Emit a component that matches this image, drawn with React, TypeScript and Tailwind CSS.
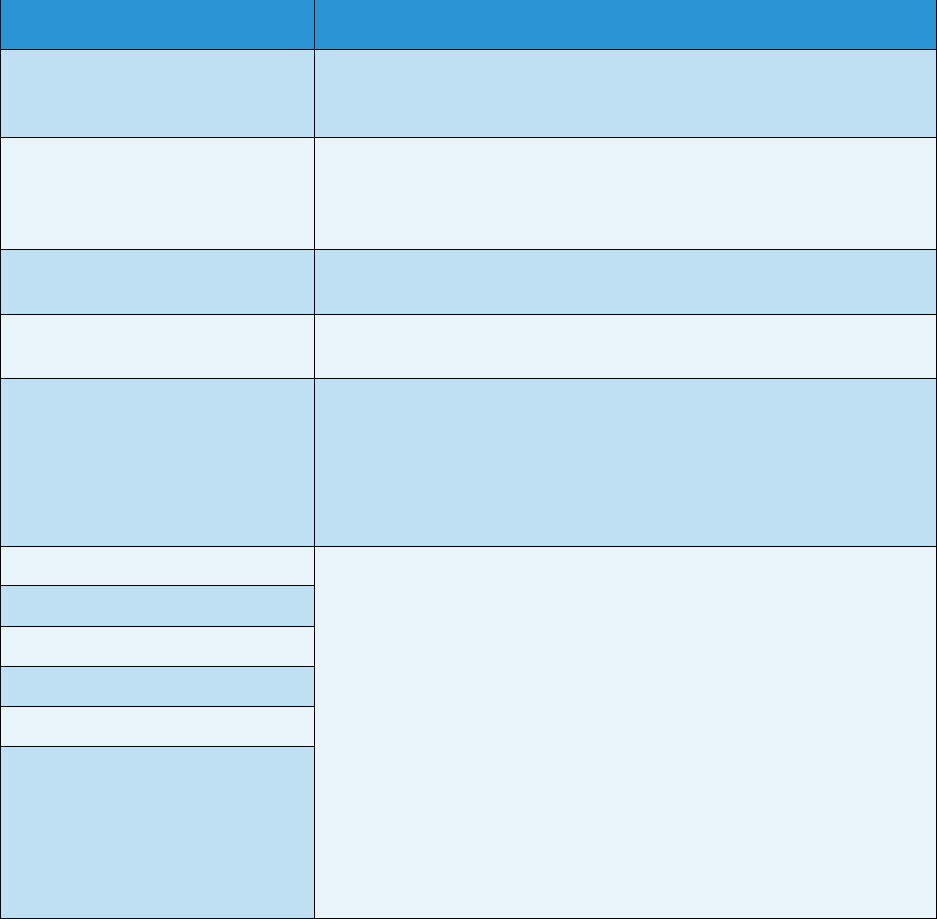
import React from "react";

const H = "bg-[#2a95d5]";
const M = "bg-[#bfe0f3]";
const L = "bg-[#e9f4fb]";

function Row({ h, c }: { h: string; c: string }) {
  return (
    <div className={`grid grid-cols-[313px_1fr] gap-px ${h}`}>
      <div className={c} />
      <div className={c} />
    </div>
  );
}

export default function App() {
  return (
    <div className="w-[937px] h-[919px] bg-black px-px pb-px flex flex-col gap-px">
      <Row h="h-[49px]" c={H} />
      <Row h="h-[87px]" c={M} />
      <Row h="h-[111px]" c={L} />
      <Row h="h-[64px]" c={M} />
      <Row h="h-[63px]" c={L} />
      <Row h="h-[167px]" c={M} />
      <div className="grid grid-cols-[313px_1fr] gap-px h-[371px]">
        <div className="flex flex-col gap-px">
          <div className={`h-[38px] ${L}`} />
          <div className={`h-[40px] ${M}`} />
          <div className={`h-[39px] ${L}`} />
          <div className={`h-[39px] ${M}`} />
          <div className={`h-[39px] ${L}`} />
          <div className={`flex-1 ${M}`} />
        </div>
        <div className={L} />
      </div>
    </div>
  );
}
